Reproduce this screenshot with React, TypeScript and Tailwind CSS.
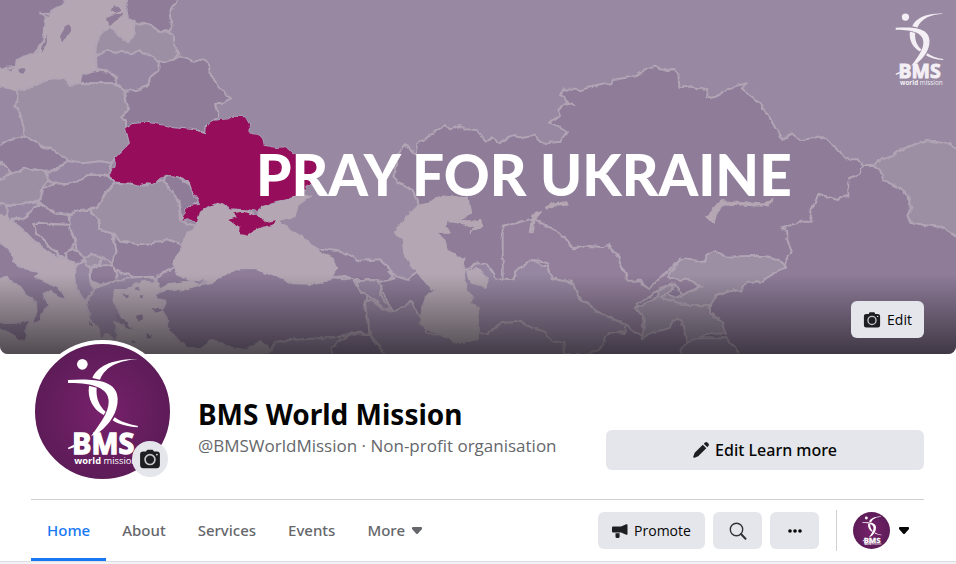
import React from "react";

type Region = { d: string; tone: string };

const LIGHT = "#9c8fa4";
const MID = "#9686a1";
const DARK = "#8e7b99";
const SEA = "#b4a7b3";
const BORDER = "#b1a4b4";

const regions: Region[] = [
  // Kazakhstan and China
  { tone: DARK, d: "M1255 610L1240 575 1200 550 1180 530 1190 500 1185 475 1215 435 1250 465 1255 430 1285 410 1310 392 1335 375 1350 388 1380 378 1395 388 1430 390 1460 425 1475 412 1500 430 1525 412 1545 405 1560 412 1600 405 1620 425 1640 430 1680 425 1705 395 1690 385 1650 368 1680 345 1675 330 1695 312 1720 315 1695 303 1690 290 1680 285 1690 268 1740 270 1790 258 1830 250 1840 240 1908 228 1940 208 1965 200 2000 210 2025 208 2035 222 2038 260 2060 262 2075 255 2090 268 2125 265 2120 295 2150 290 2180 270 2210 258 2240 250 2225 265 2280 310 2310 355 2350 420 2362 408 2375 400 2400 420 2440 415 2460 408 2480 418 2500 440 2520 455 2535 478 2575 478 2590 495 2620 495 2900 560 2900 1100 1240 1100Z" },
  { tone: LIGHT, d: "M2620 495L2645 478 2680 468 2700 450 2780 420 2830 430 2850 432 2900 470 2900 730 2820 680 2770 675 2730 665 2722 650 2735 620 2725 590 2700 565 2650 540 2640 510Z" },
  // Central Asia
  { tone: "#937f9b", d: "M1508 680L1600 655 1680 700 1720 745 1770 738 1810 742 1822 735 1855 770 1865 808 1880 820 1880 842 1920 842 1948 865 1980 835 2010 810 2040 775 2010 830 2060 835 2100 860 2050 885 2020 850 1975 870 1950 890 1910 910 1930 960 1925 1010 1880 975 1800 940 1735 890 1715 845 1655 840 1640 785 1600 780 1545 815 1545 838 1508 838Z" },
  { tone: MID, d: "M1390 815L1430 790 1460 792 1490 835 1545 838 1545 815 1565 800 1600 780 1625 795 1645 800 1655 835 1700 845 1720 855 1735 890 1800 940 1880 975 1875 1000 1850 995 1820 1005 1810 1040 1760 1062 1692 1062 1690 1030 1660 1025 1630 995 1585 980 1560 965 1500 970 1470 998 1420 1002Z" },
  { tone: LIGHT, d: "M2005 828L2040 782 2060 775 2115 788 2120 765 2145 755 2180 770 2240 768 2300 768 2335 780 2358 802 2320 820 2290 845 2240 845 2220 878 2200 868 2150 885 2130 918 2080 920 2050 912 1980 895 2000 880 2030 895 2050 885 2105 860 2060 835 2040 843Z" },
  { tone: LIGHT, d: "M1905 925L1975 890 1970 875 2015 850 2020 870 1985 890 2050 915 2130 915 2130 940 2165 965 2178 1002 2130 1000 2060 1028 2045 965 2030 955 2005 985 1950 1000 1925 1018 1935 960Z" },
  { tone: MID, d: "M2040 1050L2080 1015 2180 1015 2210 1045 2215 1070 2050 1070Z" },
  // Iran and Caucasus
  { tone: MID, d: "M1095 905L1110 900 1170 938 1235 905 1265 955 1280 1000 1420 1002 1470 998 1500 970 1560 965 1585 980 1630 995 1660 1025 1690 1030 1692 1070 1160 1070 1110 1000 1100 960Z" },
  { tone: DARK, d: "M940 742L1020 755 1080 782 1140 778 1165 800 1180 828 1160 843 1110 840 1060 840 1035 828 1000 832Z" },
  { tone: DARK, d: "M1130 842L1160 842 1185 835 1165 815 1220 840 1250 815 1300 870 1290 960 1262 955 1235 905 1180 935 1165 910 1145 870Z" },
  { tone: MID, d: "M1070 843L1130 840 1145 860 1140 885 1175 930 1150 925 1115 893 1080 885Z" },
  // Mediterranean
  { tone: SEA, d: "M0 645L30 650 200 770 345 860 560 835 830 1000 830 1070 0 1070Z" },
  { tone: DARK, d: "M-10 720L30 750 42 785 70 805 115 812 118 825 105 833 150 850 190 875 195 895 180 898 150 872 130 880 148 920 125 940 118 965 98 975 110 935 108 910 80 885 60 860 40 850 20 830 -10 838Z" },
  { tone: DARK, d: "M-10 970L60 968 92 958 80 985 75 1025 50 1015 20 995 -10 985Z" },
  // Turkey and the Levant
  { tone: MID, d: "M800 1070L825 1020 870 1020 1010 1000 1040 1050 1040 1070Z" },
  { tone: DARK, d: "M465 880L500 870 560 862 640 845 680 820 720 808 770 808 830 830 880 850 960 852 1000 832 1060 838 1080 870 1100 890 1092 915 1105 960 1108 1002 1080 998 1050 1000 1000 1015 960 1015 870 1020 825 1025 815 1050 780 1025 740 1050 700 1045 640 1020 600 1048 560 1040 520 1010 500 980 505 960 485 930 495 905 470 900Z" },
  { tone: DARK, d: "M1000 1070L990 1045 1050 1000 1108 1002 1160 1070Z" },
  // Scandinavia and the Baltic
  { tone: SEA, d: "M200 -10H380L375 15 395 50 403 60 400 110 385 123 365 118 345 95 330 80 310 95 295 115 285 150 288 180 290 200 280 225 245 245 210 255 195 232 165 232 130 245 100 260 50 272 30 265 -10 258V200L40 215 60 150Z" },
  { tone: DARK, d: "M-10 -10H200L185 15 165 28 145 42 120 38 138 52 132 80 130 120 115 150 105 165 70 168 50 180 48 200 -10 206Z" },
  { tone: DARK, d: "M385 -10L535 -10 525 15 508 30 512 60 518 80 505 95 475 92 455 78 430 68 405 75 403 60 385 55 375 20Z" },
  { tone: LIGHT, d: "M403 75L430 68 455 78 475 92 505 95 518 105 520 130 535 160 520 180 480 188 450 165 425 158 418 150 405 160 350 155 320 152 285 165 290 130 300 105 330 80 345 95 365 118 385 123 400 110Z" },
  { tone: MID, d: "M288 170L320 152 350 155 405 160 418 150 425 158 450 165 480 188 478 210 450 232 445 258 410 270 375 272 345 245 348 230 325 215 290 210Z" },
  { tone: DARK, d: "M245 225L290 212 325 215 348 230 345 250 240 248Z" },
  { tone: DARK, d: "M375 272L410 270 445 258 450 232 478 210 480 188 520 180 540 168 565 175 580 185 610 178 630 195 632 225 660 265 690 295 665 312 645 312 655 350 640 362 622 375 615 395 580 390 520 385 440 370 400 372 378 385 378 362 362 350 385 330 380 310Z" },
  // Central Europe
  { tone: LIGHT, d: "M50 272L100 260 130 245 165 232 195 235 210 255 240 250 345 250 370 270 380 310 385 330 362 350 378 362 378 385 390 430 345 475 335 490 300 484 250 490 210 485 160 450 130 440 75 410 70 380 60 340 45 320 55 290Z" },
  { tone: DARK, d: "M-10 440L30 420 60 410 75 410 120 430 125 445 150 442 205 480 170 510 130 512 75 505 40 522 20 500 -10 482Z" },
  { tone: LIGHT, d: "M-10 540L40 520 75 505 130 512 145 525 140 545 125 570 125 600 90 605 60 615 20 612 -10 608Z" },
  { tone: MID, d: "M140 515L170 510 205 480 250 490 300 484 335 490 325 525 300 522 265 525 250 540 200 553 160 550 140 535Z" },
  { tone: DARK, d: "M130 565L170 550 200 553 250 540 265 525 310 525 350 545 320 570 290 625 240 630 205 645 165 640 120 605Z" },
  { tone: MID, d: "M20 615L60 615 120 602 100 630 70 655 30 660 20 640Z" },
  { tone: DARK, d: "M35 662L70 655 120 610 165 640 205 645 212 675 130 670 100 672 110 700 150 740 190 780 160 765 110 730 80 700 60 682Z" },
  { tone: DARK, d: "M100 672L150 672 212 675 230 720 195 775 150 740 110 700Z" },
  { tone: MID, d: "M205 645L240 630 270 630 300 670 300 690 335 700 350 750 335 790 300 770 275 758 255 775 230 750 225 720 212 690Z" },
  { tone: LIGHT, d: "M270 630L290 625 320 575 350 548 410 552 440 555 485 540 500 550 535 600 540 660 560 670 580 675 583 690 560 700 550 735 500 718 440 735 360 725 335 700 300 690 300 670Z" },
  { tone: DARK, d: "M340 700L360 725 440 735 500 718 550 735 545 750 522 780 525 805 495 815 475 835 400 830 350 812 335 790 350 755Z" },
  { tone: DARK, d: "M198 760L220 745 255 775 230 795 200 778Z" },
  { tone: LIGHT, d: "M250 780L275 758 305 775 300 795 270 802Z" },
  { tone: MID, d: "M230 790L255 780 268 810 270 840 285 865 255 905 230 870 225 820Z" },
  { tone: MID, d: "M260 905L285 865 340 845 400 832 460 830 470 850 440 845 400 852 380 870 345 870 340 900 360 940 385 975 340 965 355 1000 345 1022 320 1005 300 1015 290 980 270 960Z" },
  { tone: DARK, d: "M270 810L300 795 340 797 352 825 340 845 300 855 270 840Z" },
  { tone: DARK, d: "M470 830L495 815 525 808 535 825 575 845 510 852 480 868 470 850Z" },
];

const waters: string[] = [
  "M590 665L600 630 625 620 650 608 680 612 690 625 740 630 775 650 775 630 790 615 820 605 860 595 905 585 935 588 895 615 885 650 835 662 870 690 910 710 940 740 960 755 1000 775 1010 810 990 835 960 852 880 850 830 830 770 808 720 808 680 820 640 845 570 840 535 825 520 780 545 750 550 735 560 700 583 690Z",
  "M500 860L520 850 560 845 590 858 545 872Z",
  "M1255 615L1285 610 1300 595 1330 588 1380 592 1405 595 1412 640 1395 655 1350 660 1335 675 1352 700 1310 700 1335 720 1345 750 1370 770 1395 775 1390 815 1400 870 1420 890 1410 905 1435 925 1435 1018 1390 1028 1360 1025 1320 1000 1280 990 1260 970 1265 920 1285 880 1312 875 1290 865 1250 815 1215 770 1210 720 1180 700 1210 660Z",
  "M1335 655L1400 662 1440 665 1442 660 1450 678 1420 690 1412 705 1420 680 1380 668 1340 665Z",
  "M1400 815L1430 802 1445 820 1465 840 1455 862 1410 852Z",
  "M1600 642L1625 635 1605 660 1600 695 1588 702 1592 670Z",
  "M1650 608L1665 612 1700 605 1705 615 1680 618 1660 618 1635 628Z",
  "M2120 650L2140 620 2165 602 2230 608 2290 612 2320 598 2305 618 2270 618 2180 612 2150 640 2142 672Z",
];

const islands =
  "M195 80L210 75 213 88 200 108 190 127 183 122 185 97ZM146 105L128 155 122 158 130 130ZM58 208l12-4 8 10-10 8-8-6ZM335 25l20-5 10 12-20 8-12-8ZM318 55L345 42 370 42 350 60 325 75ZM410 950l15-8 5 12-12 8ZM455 925l20-5 12 12-20 6ZM440 1000l14 6-2 10-12-6ZM365 880l22 8-6 8ZM405 860l10-2 2 10-10 2ZM345 940l30 25 24 25-20-8-30-28ZM395 1020l18 8-14 4ZM8 775l14 8-6 10-10-6ZM268 960l8 20-8-4ZM420 885l12 2-2 8-10-2Z";

const ukraine =
  "M378 385L400 372 440 368 500 378 520 385 580 390 618 400 622 372 640 362 685 358 700 350 735 352 747 372 745 400 775 405 787 420 792 438 830 444 855 442 880 460 920 468 945 480 954 505 945 530 942 548 920 555 905 585 860 597 820 605 790 615 770 632 740 628 690 625 670 612 650 608 625 618 600 635 590 665 570 655 545 662 555 640 565 618 600 615 595 600 580 580 570 550 545 530 510 525 480 533 460 552 440 550 420 555 395 548 350 545 325 525 347 500 345 475 390 430Z";
const crimea = "M688 660L712 650 700 640 730 635 775 650 790 668 828 661 820 675 785 680 760 692 740 705 720 702 722 680Z";
const moldova = "M490 540L510 525 535 530 570 555 580 580 598 605 570 620 545 655 538 620 535 600Z";
const chinaBorder =
  "M2590 495L2580 520 2545 535M2545 540V585L2520 592 2515 600 2455 582 2440 620 2430 640 2438 665 2400 665 2345 685 2362 690 2362 720 2375 755 2360 775 2355 805M1908 842L1950 868";

function CoverArt() {
  return (
    <svg
      viewBox="0 0 2868 1062"
      preserveAspectRatio="xMidYMid slice"
      className="h-full w-full"
      role="img"
      aria-label="Pray for Ukraine"
    >
      <defs>
        <filter id="coast" x="0" y="0" width="100%" height="100%">
          <feTurbulence type="fractalNoise" baseFrequency="0.045" numOctaves="2" seed="4" />
          <feDisplacementMap in="SourceGraphic" scale="14" xChannelSelector="R" yChannelSelector="G" />
        </filter>
      </defs>
      <rect width="2868" height="1062" fill="#9888a2" />
      <g filter="url(#coast)" strokeLinejoin="round">
        <rect x="-20" y="-20" width="2920" height="1110" fill="#9888a2" />
        {regions.map((r) => (
          <path key={r.d} d={r.d} fill={r.tone} stroke={r.tone === SEA ? SEA : BORDER} strokeWidth="6" />
        ))}
        <path d={moldova} fill={DARK} stroke={BORDER} strokeWidth="6" />
        {waters.map((d) => (
          <path key={d} d={d} fill={SEA} stroke={SEA} strokeWidth="3" />
        ))}
        <path d={islands} fill={DARK} />
        <path d={chinaBorder} fill="none" stroke={BORDER} strokeWidth="6" />
        <path d={ukraine} fill="#960a5c" stroke="#a9a4b6" strokeWidth="5" />
        <path d={ukraine + crimea} fill="#960a5c" />
      </g>
      <text x="768" y="587" fontSize="170" fill="#fff" className="font-[Lato,sans-serif] font-black">
        PRAY FOR UKRAINE
      </text>
    </svg>
  );
}

function BmsLogo({ className }: { className: string }) {
  return (
    <svg viewBox="140 80 216 330" className={className} fill="currentColor" role="img" aria-label="BMS World Mission">
      <circle cx="186" cy="102" r="16" />
      <path d="M353 87C300 90 256 106 239 148L216 143C230 108 278 84 353 87Z" />
      <path d="M206 166L229 172C226 204 238 228 256 244L250 254C220 238 200 206 206 166Z" />
      <path d="M283 261C300 274 325 282 353 287L352 291C322 289 294 282 277 270Z" />
      <path d="M143 149C205 146 291 143 292 206C293 246 266 284 238 304L212 318C240 278 266 246 265 212C264 172 216 157 143 158Z" />
      <path d="M143 352L161 343 161 351 144 357Z" />
      <text
        x="156"
        y="372"
        fontSize="86"
        stroke="currentColor"
        strokeWidth="4"
        className="font-['Noto_Sans',sans-serif] font-bold"
      >
        BMS
      </text>
      <text x="162" y="402" fontSize="28" className="font-['Open_Sans',sans-serif]">
        <tspan className="font-bold">world</tspan>
        <tspan> mission</tspan>
      </text>
    </svg>
  );
}

function Camera({ className }: { className: string }) {
  return (
    <svg viewBox="0 0 20 20" className={className} aria-hidden="true">
      <path
        d="M6.5 3.2C6.8 2 7.4 1.500 8.500 1.500h3c1.100 0 1.700.5 2 1.700h2.700c1.900 0 2.800.9 2.800 2.800v9.500c0 1.900-.9 2.800-2.800 2.800H3.800C1.900 18.300 1 17.400 1 15.500V6c0-1.900.9-2.800 2.800-2.800Z"
        fill="#1c1e21"
      />
      <circle cx="10" cy="10.500" r="4.500" fill="none" stroke="#c5c6ca" strokeWidth="1.500" />
      <circle cx="16.300" cy="6" r=".8" fill="#e4e6eb" />
    </svg>
  );
}

function Caret() {
  return (
    <svg viewBox="0 0 10 7" className="h-[7px] w-[10px]" fill="currentColor" aria-hidden="true">
      <path d="M1 0h8q1 0 1 1v1L6 6.500q-1 1-2 0L0 2V1q0-1 1-1Z" />
    </svg>
  );
}

const tabs = ["About", "Services", "Events"];

export default function App() {
  return (
    <div className="min-h-screen bg-[#f0f2f5] font-['Noto_Sans','Open_Sans',sans-serif] text-[#050505]">
      <header className="border-b border-[#dcdee2] bg-white">
        <div className="relative h-[354px] overflow-hidden rounded-b-lg">
          <CoverArt />
          <div className="absolute inset-x-0 bottom-0 h-20 bg-linear-to-t from-black/55 to-transparent" />
          <BmsLogo className="absolute top-3 right-3 h-[75px] w-[49px] text-[#f3eff5]" />
          <button className="absolute right-8 bottom-4 flex h-[37px] w-[73px] items-center justify-center gap-1.5 rounded-md bg-[#e4e6eb] font-['Open_Sans',sans-serif] text-sm font-medium">
            <Camera className="size-[18px]" />
            Edit
          </button>
        </div>

        <div className="pr-8 pl-[31px]">
          <div className="flex h-[146px] items-start border-b border-[#ced0d4]">
            <div className="relative -mt-[14px] shrink-0">
              <div className="flex size-[143px] items-center justify-center rounded-full border-4 border-white bg-radial from-[#78216c] to-[#521a50] text-white">
                <BmsLogo className="h-[110px] w-[72px]" />
              </div>
              <button
                aria-label="Update profile picture"
                className="absolute right-[6px] bottom-[6px] flex size-9 items-center justify-center rounded-full bg-[#e4e6eb]"
              >
                <Camera className="size-[22px]" />
              </button>
            </div>
            <div className="mt-11 ml-6 min-w-0 flex-1">
              <h1 className="text-[28px] leading-8 font-bold whitespace-nowrap">BMS World Mission</h1>
              <p className="font-['Open_Sans',sans-serif] text-[17px] leading-8 whitespace-nowrap text-[#65676b]">
                @BMSWorldMission · Non-profit organisation
              </p>
            </div>
            <button className="mt-[76px] flex h-10 w-[318px] shrink-0 items-center justify-center gap-1.5 rounded-md bg-[#e4e6eb] text-base font-medium">
              <svg viewBox="0 0 16 16" className="size-4" fill="#1c1e21" aria-hidden="true">
                <path d="M9.800 2.700 13.300 6.200 5.200 14.300 1.500 15.700Q0 16 .3 14.500L1.700 10.800ZM10.800 1.700 12 .6q1.200-1 2.400 0l1 1q1 1.200 0 2.400l-1.100 1.200Z" />
              </svg>
              Edit Learn more
            </button>
          </div>

          <div className="flex h-[61px] items-stretch justify-between">
            <nav className="flex text-[15px] font-medium text-[#65676b]">
              <a href="#home" className="flex items-center border-b-[3px] border-[#1877f2] px-4 pt-[3px] text-[#1877f2]">
                Home
              </a>
              {tabs.map((t) => (
                <a key={t} href={"#" + t.toLowerCase()} className="flex items-center px-4">
                  {t}
                </a>
              ))}
              <button className="flex items-center gap-[7px] px-4">
                More
                <Caret />
              </button>
            </nav>
            <div className="flex items-center gap-2 font-['Open_Sans',sans-serif] text-sm font-medium">
              <button className="flex h-[37px] w-[107px] items-center justify-center gap-1.5 rounded-md bg-[#e4e6eb]">
                <svg viewBox="0 0 16 16" className="size-4" fill="#1c1e21" aria-hidden="true">
                  <path d="M0 4.500Q0 3.500 1 3.500H9L14.200 1.300q1.300-.5 1.300.8v8.800q0 1.300-1.300.8L9 9.500H1Q0 9.500 0 8.500ZM3.500 10.200H7.600v3.300q0 1.500-1.500 1.500H5q-1.500 0-1.500-1.500Z" />
                </svg>
                Promote
              </button>
              <button aria-label="Search" className="flex h-[37px] w-[49px] items-center justify-center rounded-md bg-[#e4e6eb]">
                <svg viewBox="0 0 18 18" className="size-[18px]" fill="none" stroke="#303236" aria-hidden="true">
                  <circle cx="7.500" cy="7.500" r="6.200" strokeWidth="1.400" />
                  <path d="m12 12 4.500 4.800" strokeWidth="2" strokeLinecap="round" />
                </svg>
              </button>
              <button aria-label="More options" className="flex h-[37px] w-[49px] items-center justify-center rounded-md bg-[#e4e6eb]">
                <svg viewBox="0 0 14 4" className="h-1 w-[14px]" fill="#050505" aria-hidden="true">
                  <circle cx="2" cy="2" r="1.800" />
                  <circle cx="7" cy="2" r="1.800" />
                  <circle cx="12" cy="2" r="1.800" />
                </svg>
              </button>
              <div className="mr-2 ml-[9px] h-[41px] w-px bg-[#ced0d4]" />
              <button aria-label="Switch profile" className="flex items-center gap-[9px] pr-[15px]">
                <span className="flex size-[37px] items-center justify-center rounded-full bg-radial from-[#78216c] to-[#521a50] text-white">
                  <BmsLogo className="h-[30px] w-5" />
                </span>
                <Caret />
              </button>
            </div>
          </div>
        </div>
      </header>
    </div>
  );
}
